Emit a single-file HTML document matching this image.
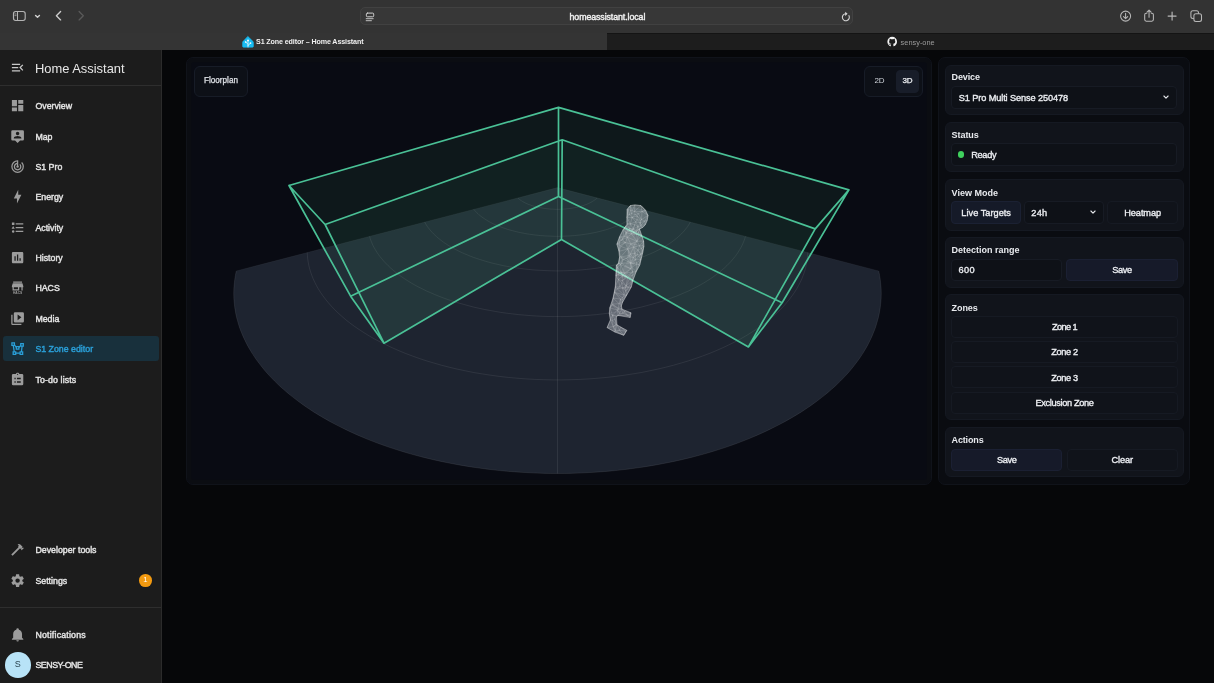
<!DOCTYPE html>
<html lang="en">
<head>
<meta charset="utf-8">
<title>S1 Zone editor – Home Assistant</title>
<style>
*{box-sizing:border-box;margin:0;padding:0}
html,body{width:1214px;height:683px;overflow:hidden;background:#060709;font-family:"Liberation Sans",sans-serif;color:#e6e8ec}
.abs{position:absolute}
#root{position:relative;width:1214px;height:683px;overflow:hidden;will-change:transform;transform:translateZ(0)}
/* browser chrome */
#toolbar{left:0;top:0;width:1214px;height:33px;background:#333333}
#urlbox{left:360.4px;top:7.1px;width:493px;height:17.8px;border-radius:5px;background:#373737;border:1px solid #414141}
#urltext{left:507.4px;top:7.6px;width:200px;height:18px;line-height:18px;text-align:center;font-size:8.8px;letter-spacing:-0.08px;color:#f2f2f2;-webkit-text-stroke:0.4px #f2f2f2}
#tab1{left:0;top:33px;width:607px;height:17px;background:#343434}
#tab2{left:607px;top:33px;width:607px;height:17px;background:#1d1d1d;border-top:1px solid #141414}
.tabt{top:34.4px;height:17px;line-height:17px;font-size:7.1px;letter-spacing:-0.1px;white-space:nowrap}
/* sidebar */
#sidebar{left:0;top:50px;width:162px;height:633px;background:#1c1c1c;border-right:1px solid #2b2b2b}
#sbhead{left:0;top:50px;width:161px;height:36px;border-bottom:1px solid #2e2e2e}
#sbtitle{left:35px;top:58.9px;height:20px;line-height:20px;font-size:12.9px;color:#e7e7e7;white-space:nowrap}
.it{left:35.4px;height:14px;line-height:14px;font-size:8.8px;color:#e4e4e4;white-space:nowrap;-webkit-text-stroke:0.42px currentColor}
.ic{left:10px;width:14px;height:14px}
#sel{left:3px;top:336px;width:156px;height:25px;border-radius:3px;background:#18303c}
#sbdiv{left:0;top:607px;width:161px;height:1px;background:#2e2e2e}
/* main */
#canvas{left:185.5px;top:56.8px;width:746px;height:428.4px;border:1px solid #10131a;border-radius:7px;background:#090b13;box-shadow:inset 0 0 0 4.5px #0b0d12}
#panel{left:938.2px;top:56.8px;width:252px;height:428.4px;border:1px solid #10131a;border-radius:7px;background:#0a0c11}
.card{left:945px;width:239px;background:#11141b;border:1px solid #151922;border-radius:6px}
.lbl{left:951.6px;height:12px;line-height:12px;font-size:9px;font-weight:bold;color:#e8eaee;white-space:nowrap}
.fld{background:#0e1117;border:1px solid #171b24;border-radius:4px}
.btn{background:#141821;border:1px solid #1a1f2a;border-radius:4px}
.bt{height:12px;line-height:12px;font-size:9.2px;color:#eceef2;text-align:center;white-space:nowrap;-webkit-text-stroke:0.35px #eceef2;margin-top:0.4px}
</style>
</head>
<body>
<div id="root">
<!-- CHROME -->
<div id="toolbar" class="abs"></div>
<div id="urlbox" class="abs"></div>
<div id="urltext" class="abs">homeassistant.local</div>
<div id="tab1" class="abs"></div>
<div id="tab2" class="abs"></div>
<div class="abs tabt" style="left:256px;color:#f0f0f0;font-weight:bold">S1 Zone editor – Home Assistant</div>
<div class="abs tabt" style="left:900.6px;color:#9c9c9c;font-size:7.4px;letter-spacing:0">sensy-one</div>
<!--CHROME-->
<svg class="abs" style="left:0;top:0" width="1214" height="50" viewBox="0 0 1214 50" fill="none" stroke-linecap="round" stroke-linejoin="round">
<rect x="13.5" y="11.5" width="11.7" height="9" rx="2.2" stroke="#b4b4b4" stroke-width="1.15"/><path d="M17.5 11.7V20.3" stroke="#b4b4b4" stroke-width="1"/><path d="M14.9 14h1.2M14.9 15.6h1.2" stroke="#b4b4b4" stroke-width="0.7"/>
<path d="M35.6 15.5L37.5 17.2L39.4 15.5" stroke="#cfcfcf" stroke-width="1.5"/>
<path d="M60.6 11.5L56.4 15.7L60.6 19.9" stroke="#cdcdcd" stroke-width="1.35"/>
<path d="M79.1 11.5L83.3 15.7L79.1 19.9" stroke="#595959" stroke-width="1.35"/>
<rect x="366.4" y="13.1" width="7.3" height="3.7" rx="1" stroke="#d0d0d0" stroke-width="1"/><path d="M366.2 18.7H373.2M366.2 20.7H371.4" stroke="#d0d0d0" stroke-width="0.9"/>
<path d="M848.9 15.6A3.5 3.5 0 1 1 845.7 13.8" stroke="#d8d8d8" stroke-width="1.05"/><path d="M845.2 11.7L847.6 13.8L845.2 15.9Z" fill="#d8d8d8" stroke="none"/>
<circle cx="1125.6" cy="16.1" r="5" stroke="#b8b8b8" stroke-width="1.05"/><path d="M1125.6 13.3V18.6M1123.5 16.6L1125.6 18.7L1127.7 16.6" stroke="#b8b8b8" stroke-width="1.05"/>
<path d="M1146.8 13.2H1146.3A1.6 1.6 0 0 0 1144.7 14.8V19.6A1.6 1.6 0 0 0 1146.3 21.2H1151.8A1.6 1.6 0 0 0 1153.4 19.6V14.8A1.6 1.6 0 0 0 1151.8 13.2H1151.3" stroke="#b8b8b8" stroke-width="1.05"/><path d="M1149.05 17.3V10.3M1147 12.2L1149.05 10.1L1151.1 12.2" stroke="#b8b8b8" stroke-width="1.05"/>
<path d="M1168.1 16.1H1176.1M1172.1 12.1V20.1" stroke="#b8b8b8" stroke-width="1.15"/>
<rect x="1190.9" y="10.8" width="7.6" height="7.6" rx="2" stroke="#b8b8b8" stroke-width="1.05"/><rect x="1193.9" y="13.8" width="7.6" height="7.6" rx="2" fill="#333333" stroke="#b8b8b8" stroke-width="1.05"/>
<path d="M248 36.6L253.1 41.6Q253.4 41.9 253.4 42.4V46.3Q253.4 47.2 252.5 47.2H243.5Q242.6 47.2 242.6 46.3V42.4Q242.6 41.9 242.9 41.6Z" fill="#18bcf2" stroke="#18bcf2" stroke-width="0.6"/>
<path d="M248 47V40.6M248 45.6L250.3 43.3M248 44.3L245.9 42.2" stroke="#fff" stroke-width="0.7"/><circle cx="248" cy="40.4" r="0.95" fill="#fff"/><circle cx="250.5" cy="43.1" r="0.85" fill="#fff"/><circle cx="245.7" cy="42" r="0.85" fill="#fff"/>
<circle cx="892.2" cy="41.7" r="5" fill="#1c1c1c"/><g transform="translate(886.4 35.9) scale(0.483)"><path d="M12,2A10,10 0 0,0 2,12C2,16.42 4.87,20.17 8.84,21.5C9.34,21.58 9.5,21.27 9.5,21C9.5,20.77 9.5,20.14 9.5,19.31C6.73,19.91 6.14,17.97 6.14,17.97C5.68,16.81 5.03,16.5 5.03,16.5C4.12,15.88 5.1,15.9 5.1,15.9C6.1,15.97 6.63,16.93 6.63,16.93C7.5,18.45 8.97,18 9.54,17.76C9.63,17.11 9.89,16.67 10.17,16.42C7.95,16.17 5.62,15.31 5.62,11.5C5.62,10.39 6,9.5 6.65,8.79C6.55,8.54 6.2,7.5 6.75,6.15C6.75,6.15 7.59,5.88 9.5,7.17C10.29,6.95 11.15,6.84 12,6.84C12.85,6.84 13.71,6.95 14.5,7.17C16.41,5.88 17.25,6.15 17.25,6.15C17.8,7.5 17.45,8.54 17.35,8.79C18,9.5 18.38,10.39 18.38,11.5C18.38,15.32 16.04,16.16 13.81,16.41C14.17,16.72 14.5,17.33 14.5,18.26C14.5,19.6 14.5,20.68 14.5,21C14.5,21.27 14.66,21.59 15.17,21.5C19.14,20.16 22,16.42 22,12A10,10 0 0,0 12,2Z" fill="#f4f4f4"/></g>
</svg>
<!--/CHROME-->
<!-- SIDEBAR -->
<div id="sidebar" class="abs"></div>
<div id="sbhead" class="abs"></div>
<div id="sbtitle" class="abs">Home Assistant</div>
<div id="sel" class="abs"></div>
<div class="abs it" style="top:99px">Overview</div>
<div class="abs it" style="top:129.5px">Map</div>
<div class="abs it" style="top:160px">S1 Pro</div>
<div class="abs it" style="top:190px">Energy</div>
<div class="abs it" style="top:220.5px">Activity</div>
<div class="abs it" style="top:251px">History</div>
<div class="abs it" style="top:281px">HACS</div>
<div class="abs it" style="top:311.5px">Media</div>
<div class="abs it" style="top:342px;color:#2a9fd8">S1 Zone editor</div>
<div class="abs it" style="top:372.5px;letter-spacing:0.12px">To-do lists</div>
<div class="abs it" style="top:543px">Developer tools</div>
<div class="abs it" style="top:573.5px">Settings</div>
<div id="sbdiv" class="abs"></div>
<div class="abs it" style="top:627.5px;letter-spacing:0.2px">Notifications</div>
<div class="abs it" style="top:658px;letter-spacing:-0.45px">SENSY-ONE</div>
<!--ICONS-->
<svg class="abs" style="left:10.0px;top:60.4px" width="15.2" height="15.2" viewBox="0 0 24 24"><path fill="#c8c8c8" fill-rule="evenodd" d="M21,15.61L19.59,17L14.58,12L19.59,7L21,8.39L17.44,12L21,15.61M3,6H16V8H3V6M3,13V11H13V13H3M3,18V16H16V18H3Z"/></svg>
<svg class="abs" style="left:10.0px;top:98.4px" width="15.2" height="15.2" viewBox="0 0 24 24"><path fill="#9c9c9c" fill-rule="evenodd" d="M13,3V9H21V3M13,21H21V11H13M3,21H11V15H3M3,13H11V3H3V13Z"/></svg>
<svg class="abs" style="left:10.0px;top:128.9px" width="15.2" height="15.2" viewBox="0 0 24 24"><path fill="#9c9c9c" fill-rule="evenodd" d="M20,2H4A2,2 0 0,0 2,4V16A2,2 0 0,0 4,18H8L12,22L16,18H20A2,2 0 0,0 22,16V4A2,2 0 0,0 20,2M12,4.3C13.5,4.3 14.7,5.5 14.7,7C14.7,8.5 13.5,9.7 12,9.7C10.5,9.7 9.3,8.5 9.3,7C9.3,5.5 10.5,4.3 12,4.3M18,15H6V14.1C6,12.1 10,11 12,11C14,11 18,12.1 18,14.1V15Z"/></svg>
<svg class="abs" style="left:10.0px;top:159.4px" width="15.2" height="15.2" viewBox="0 0 24 24"><path fill="#9c9c9c" fill-rule="evenodd" d="M19.07,4.93L17.66,6.34C19.1,7.79 20,9.79 20,12A8,8 0 0,1 12,20A8,8 0 0,1 4,12C4,7.92 7.05,4.56 11,4.07V6.09C8.16,6.57 6,9.03 6,12A6,6 0 0,0 12,18A6,6 0 0,0 18,12C18,10.34 17.33,8.84 16.24,7.76L14.83,9.17C15.55,9.9 16,10.9 16,12A4,4 0 0,1 12,16A4,4 0 0,1 8,12C8,10.14 9.28,8.59 11,8.14V10.28C10.4,10.63 10,11.26 10,12A2,2 0 0,0 12,14A2,2 0 0,0 14,12C14,11.26 13.6,10.62 13,10.28V2H12A10,10 0 0,0 2,12A10,10 0 0,0 12,22A10,10 0 0,0 22,12C22,9.24 20.88,6.74 19.07,4.93Z"/></svg>
<svg class="abs" style="left:10.0px;top:189.4px" width="15.2" height="15.2" viewBox="0 0 24 24"><path fill="#9c9c9c" fill-rule="evenodd" d="M11,15H6L13,1V9H18L11,23V15Z"/></svg>
<svg class="abs" style="left:10.0px;top:219.9px" width="15.2" height="15.2" viewBox="0 0 24 24"><path fill="#9c9c9c" fill-rule="evenodd" d="M5,9.5L7.5,14H2.5L5,9.5M3,4H7V8H3V4M5,20A2,2 0 0,0 7,18A2,2 0 0,0 5,16A2,2 0 0,0 3,18A2,2 0 0,0 5,20M9,5V7H21V5H9M9,19H21V17H9V19M9,13H21V11H9V13Z"/></svg>
<svg class="abs" style="left:10.0px;top:250.4px" width="15.2" height="15.2" viewBox="0 0 24 24"><path fill="#9c9c9c" fill-rule="evenodd" d="M17,17H15V13H17M13,17H11V7H13M9,17H7V10H9M19,3H5C3.9,3 3,3.9 3,5V19C3,20.1 3.9,21 5,21H19C20.1,21 21,20.1 21,19V5C21,3.9 20.1,3 19,3Z"/></svg>
<svg class="abs" style="left:10px;top:280.4px" width="15.2" height="15.2" viewBox="0 0 24 24"><path fill="#9c9c9c" d="M5,2.5H19V4.3H5V2.5M4.4,5.2H19.6L21,9.6V11.4H20V16.6H4V11.4H3V9.6L4.4,5.2M6,11.6V14.6H12.6V11.6H6M14.6,11.6V16.6H18V11.6H14.6Z"/><text x="12" y="22.4" font-size="5.2" font-weight="bold" text-anchor="middle" fill="#9c9c9c" font-family="Liberation Sans, sans-serif">HACS</text></svg>
<svg class="abs" style="left:10.0px;top:310.9px" width="15.2" height="15.2" viewBox="0 0 24 24"><path fill="#9c9c9c" fill-rule="evenodd" d="M4,6H2V20A2,2 0 0,0 4,22H18V20H4V6M20,2H8A2,2 0 0,0 6,4V16A2,2 0 0,0 8,18H20A2,2 0 0,0 22,16V4A2,2 0 0,0 20,2M12,14.5V5.5L18,10L12,14.5Z"/></svg>
<svg class="abs" style="left:10.0px;top:341.4px" width="15.2" height="15.2" viewBox="0 0 24 24"><path fill="#2a9fd8" fill-rule="evenodd" d="M2,2V8H4.28L5.57,16H4V22H10V20.06L15,20.05V22H21V16H19.17L20,9H22V3H16V6.53L14.8,8H9.59L8,5.82V2M4,4H6V6H4M18,5H20V7H18M6.31,8H7.11L9,10.59V14H15V10.91L16.57,9H18L17.16,16H15V18.06H10V16H7.6M11,10H13V12H11M6,18H8V20H6M17,18H19V20H17"/></svg>
<svg class="abs" style="left:10.0px;top:371.9px" width="15.2" height="15.2" viewBox="0 0 24 24"><path fill="#9c9c9c" fill-rule="evenodd" d="M19,3H14.82C14.4,1.84 13.3,1 12,1C10.7,1 9.6,1.84 9.18,3H5A2,2 0 0,0 3,5V19A2,2 0 0,0 5,21H19A2,2 0 0,0 21,19V5A2,2 0 0,0 19,3Z M12,2.6A1,1 0 0,1 13,3.6A1,1 0 0,1 12,4.6A1,1 0 0,1 11,3.6A1,1 0 0,1 12,2.6Z M7,9H9V11.3H7Z M11,9H17V11.3H11Z M7,14.5H9V16.8H7Z M11,14.5H17V16.8H11Z"/></svg>
<svg class="abs" style="left:10.0px;top:542.4px" width="15.2" height="15.2" viewBox="0 0 24 24"><path fill="#9c9c9c" fill-rule="evenodd" d="M2,19.63L13.43,8.2L12.72,7.5L14.14,6.07L12,3.89C13.2,2.7 15.09,2.7 16.27,3.89L19.87,7.5L18.45,8.91H21.29L22,9.62L18.45,13.21L17.74,12.5V9.62L16.27,11.04L15.56,10.33L4.13,21.76L2,19.63Z"/></svg>
<svg class="abs" style="left:10.0px;top:572.9px" width="15.2" height="15.2" viewBox="0 0 24 24"><path fill="#9c9c9c" fill-rule="evenodd" d="M12,15.5A3.5,3.5 0 0,1 8.5,12A3.5,3.5 0 0,1 12,8.5A3.5,3.5 0 0,1 15.5,12A3.5,3.5 0 0,1 12,15.5M19.43,12.97C19.47,12.65 19.5,12.33 19.5,12C19.5,11.67 19.47,11.34 19.43,11L21.54,9.37C21.73,9.22 21.78,8.95 21.66,8.73L19.66,5.27C19.54,5.05 19.27,4.96 19.05,5.05L16.56,6.05C16.04,5.66 15.5,5.32 14.87,5.07L14.5,2.42C14.46,2.18 14.25,2 14,2H10C9.75,2 9.54,2.18 9.5,2.42L9.13,5.07C8.5,5.32 7.96,5.66 7.44,6.05L4.95,5.05C4.73,4.96 4.46,5.05 4.34,5.27L2.34,8.73C2.21,8.95 2.27,9.22 2.46,9.37L4.57,11C4.53,11.34 4.5,11.67 4.5,12C4.5,12.33 4.53,12.65 4.57,12.97L2.46,14.63C2.27,14.78 2.21,15.05 2.34,15.27L4.34,18.73C4.46,18.95 4.73,19.03 4.95,18.95L7.44,17.94C7.96,18.34 8.5,18.68 9.13,18.93L9.5,21.58C9.54,21.82 9.75,22 10,22H14C14.25,22 14.46,21.82 14.5,21.58L14.87,18.93C15.5,18.67 16.04,18.34 16.56,17.94L19.05,18.95C19.27,19.03 19.54,18.95 19.66,18.73L21.66,15.27C21.78,15.05 21.73,14.78 21.54,14.63L19.43,12.97Z"/></svg>
<svg class="abs" style="left:10.0px;top:626.9px" width="15.2" height="15.2" viewBox="0 0 24 24"><path fill="#9c9c9c" fill-rule="evenodd" d="M21,19V20H3V19L5,17V11C5,7.9 7.03,5.17 10,4.29C10,4.19 10,4.1 10,4A2,2 0 0,1 12,2A2,2 0 0,1 14,4C14,4.1 14,4.19 14,4.29C16.97,5.17 19,7.9 19,11V17L21,19M14,21A2,2 0 0,1 12,23A2,2 0 0,1 10,21"/></svg>
<div class="abs" style="left:139px;top:574.3px;width:12.6px;height:12.6px;border-radius:50%;background:#f39a10;color:#fff;font-size:7.6px;line-height:12.6px;text-align:center">1</div>
<div class="abs" style="left:5px;top:652px;width:25.5px;height:25.5px;border-radius:50%;background:#b8e3f7;color:#2b4450;font-size:9px;line-height:25.5px;text-align:center">S</div>
<!--/ICONS-->
<!-- MAIN -->
<div id="canvas" class="abs"></div>
<div id="panel" class="abs"></div>
<!--SCENE-->
<svg class="abs" style="left:0;top:0" width="1214" height="683" viewBox="0 0 1214 683">
<path d="M557.5 187.6 L236.3 270.9 L235.7 273.6 L235.2 276.3 L234.8 279.1 L234.4 281.9 L234.1 284.7 L233.9 287.6 L233.8 290.5 L233.7 293.4 L233.8 296.3 L233.9 299.3 L234.1 302.3 L234.4 305.3 L234.8 308.4 L235.3 311.4 L235.9 314.6 L236.6 317.7 L237.5 320.8 L238.4 324.0 L239.4 327.2 L240.6 330.4 L241.8 333.6 L243.2 336.9 L244.7 340.1 L246.4 343.4 L248.1 346.7 L250.0 350.0 L252.1 353.3 L254.2 356.6 L256.5 359.9 L259.0 363.2 L261.5 366.5 L264.3 369.9 L267.1 373.2 L270.2 376.5 L273.3 379.8 L276.6 383.1 L280.1 386.4 L283.7 389.6 L287.5 392.9 L291.5 396.1 L295.6 399.3 L299.8 402.5 L304.2 405.7 L308.8 408.8 L313.5 411.9 L318.4 414.9 L323.5 417.9 L328.7 420.9 L334.1 423.8 L339.6 426.6 L345.3 429.5 L351.1 432.2 L357.1 434.9 L363.2 437.5 L369.5 440.1 L375.9 442.6 L382.5 445.0 L389.2 447.3 L396.1 449.5 L403.0 451.7 L410.1 453.8 L417.4 455.8 L424.7 457.7 L432.2 459.5 L439.7 461.2 L447.4 462.8 L455.1 464.3 L463.0 465.7 L470.9 467.0 L478.9 468.1 L487.0 469.2 L495.1 470.1 L503.3 471.0 L511.6 471.7 L519.9 472.3 L528.2 472.8 L536.6 473.1 L544.9 473.4 L553.3 473.5 L561.7 473.5 L570.1 473.4 L578.4 473.1 L586.8 472.8 L595.1 472.3 L603.4 471.7 L611.7 471.0 L619.9 470.1 L628.0 469.2 L636.1 468.1 L644.1 467.0 L652.0 465.7 L659.9 464.3 L667.6 462.8 L675.3 461.2 L682.8 459.5 L690.3 457.7 L697.6 455.8 L704.9 453.8 L712.0 451.7 L718.9 449.5 L725.8 447.3 L732.5 445.0 L739.1 442.6 L745.5 440.1 L751.8 437.5 L757.9 434.9 L763.9 432.2 L769.7 429.5 L775.4 426.6 L780.9 423.8 L786.3 420.9 L791.5 417.9 L796.6 414.9 L801.5 411.9 L806.2 408.8 L810.8 405.7 L815.2 402.5 L819.4 399.3 L823.5 396.1 L827.5 392.9 L831.3 389.6 L834.9 386.4 L838.4 383.1 L841.7 379.8 L844.8 376.5 L847.9 373.2 L850.7 369.9 L853.5 366.5 L856.0 363.2 L858.5 359.9 L860.8 356.6 L862.9 353.3 L865.0 350.0 L866.9 346.7 L868.6 343.4 L870.3 340.1 L871.8 336.9 L873.2 333.6 L874.4 330.4 L875.6 327.2 L876.6 324.0 L877.5 320.8 L878.4 317.7 L879.1 314.6 L879.7 311.4 L880.2 308.4 L880.6 305.3 L880.9 302.3 L881.1 299.3 L881.2 296.3 L881.3 293.4 L881.2 290.5 L881.1 287.6 L880.9 284.7 L880.6 281.9 L880.2 279.1 L879.8 276.3 L879.3 273.6 L878.7 270.9Z" fill="#1e2430"/>
<path d="M517.8 197.9 L518.2 198.3 L518.6 198.7 L519.1 199.0 L519.6 199.4 L520.1 199.8 L520.6 200.2 L521.1 200.6 L521.7 200.9 L522.3 201.3 L522.9 201.6 L523.5 202.0 L524.1 202.3 L524.8 202.7 L525.4 203.0 L526.1 203.3 L526.8 203.6 L527.6 204.0 L528.3 204.3 L529.0 204.6 L529.8 204.8 L530.6 205.1 L531.4 205.4 L532.2 205.7 L533.0 205.9 L533.9 206.2 L534.7 206.4 L535.6 206.6 L536.5 206.9 L537.4 207.1 L538.3 207.3 L539.2 207.5 L540.1 207.7 L541.1 207.8 L542.0 208.0 L543.0 208.2 L543.9 208.3 L544.9 208.5 L545.9 208.6 L546.9 208.7 L547.9 208.8 L548.9 208.9 L549.9 209.0 L550.9 209.1 L551.9 209.1 L552.9 209.2 L553.9 209.2 L554.9 209.3 L556.0 209.3 L557.0 209.3 L558.0 209.3 L559.0 209.3 L560.1 209.3 L561.1 209.2 L562.1 209.2 L563.1 209.1 L564.1 209.1 L565.1 209.0 L566.1 208.9 L567.1 208.8 L568.1 208.7 L569.1 208.6 L570.1 208.5 L571.1 208.3 L572.0 208.2 L573.0 208.0 L573.9 207.8 L574.9 207.7 L575.8 207.5 L576.7 207.3 L577.6 207.1 L578.5 206.9 L579.4 206.6 L580.3 206.4 L581.1 206.2 L582.0 205.9 L582.8 205.7 L583.6 205.4 L584.4 205.1 L585.2 204.8 L586.0 204.6 L586.7 204.3 L587.4 204.0 L588.2 203.6 L588.9 203.3 L589.6 203.0 L590.2 202.7 L590.9 202.3 L591.5 202.0 L592.1 201.6 L592.7 201.3 L593.3 200.9 L593.9 200.6 L594.4 200.2 L594.9 199.8 L595.4 199.4 L595.9 199.0 L596.4 198.7 L596.8 198.3 L597.2 197.9" fill="none" stroke="#ffffff" stroke-opacity="0.085" stroke-width="0.9"/>
<path d="M473.7 209.3 L474.5 210.2 L475.2 211.0 L476.0 211.9 L476.9 212.8 L477.8 213.6 L478.7 214.5 L479.7 215.3 L480.8 216.2 L481.9 217.0 L483.0 217.8 L484.2 218.6 L485.4 219.4 L486.7 220.2 L488.0 221.0 L489.4 221.8 L490.8 222.5 L492.2 223.3 L493.7 224.0 L495.3 224.7 L496.9 225.4 L498.5 226.1 L500.2 226.7 L501.9 227.4 L503.6 228.0 L505.4 228.6 L507.2 229.2 L509.1 229.8 L511.0 230.3 L512.9 230.8 L514.9 231.3 L516.9 231.8 L518.9 232.3 L520.9 232.7 L523.0 233.1 L525.1 233.5 L527.2 233.9 L529.4 234.2 L531.5 234.5 L533.7 234.8 L535.9 235.1 L538.2 235.3 L540.4 235.6 L542.7 235.7 L544.9 235.9 L547.2 236.0 L549.5 236.1 L551.8 236.2 L554.1 236.3 L556.4 236.3 L558.6 236.3 L560.9 236.3 L563.2 236.2 L565.5 236.1 L567.8 236.0 L570.1 235.9 L572.3 235.7 L574.6 235.6 L576.8 235.3 L579.1 235.1 L581.3 234.8 L583.5 234.5 L585.6 234.2 L587.8 233.9 L589.9 233.5 L592.0 233.1 L594.1 232.7 L596.1 232.3 L598.1 231.8 L600.1 231.3 L602.1 230.8 L604.0 230.3 L605.9 229.8 L607.8 229.2 L609.6 228.6 L611.4 228.0 L613.1 227.4 L614.8 226.7 L616.5 226.1 L618.1 225.4 L619.7 224.7 L621.3 224.0 L622.8 223.3 L624.2 222.5 L625.6 221.8 L627.0 221.0 L628.3 220.2 L629.6 219.4 L630.8 218.6 L632.0 217.8 L633.1 217.0 L634.2 216.2 L635.3 215.3 L636.3 214.5 L637.2 213.6 L638.1 212.8 L639.0 211.9 L639.8 211.0 L640.5 210.2 L641.3 209.3" fill="none" stroke="#ffffff" stroke-opacity="0.085" stroke-width="0.9"/>
<path d="M424.6 222.0 L425.5 223.5 L426.4 225.0 L427.3 226.5 L428.4 227.9 L429.6 229.4 L430.8 230.9 L432.1 232.3 L433.5 233.8 L435.0 235.2 L436.6 236.7 L438.2 238.1 L440.0 239.5 L441.8 240.9 L443.7 242.3 L445.7 243.7 L447.8 245.0 L450.0 246.4 L452.3 247.7 L454.6 249.0 L457.0 250.2 L459.6 251.5 L462.1 252.7 L464.8 253.9 L467.6 255.0 L470.4 256.2 L473.3 257.3 L476.3 258.3 L479.3 259.3 L482.5 260.3 L485.7 261.3 L488.9 262.2 L492.2 263.1 L495.6 263.9 L499.1 264.7 L502.6 265.5 L506.1 266.2 L509.7 266.8 L513.4 267.4 L517.1 268.0 L520.8 268.5 L524.6 269.0 L528.4 269.4 L532.2 269.8 L536.0 270.1 L539.9 270.3 L543.8 270.5 L547.7 270.7 L551.6 270.8 L555.5 270.9 L559.5 270.9 L563.4 270.8 L567.3 270.7 L571.2 270.5 L575.1 270.3 L579.0 270.1 L582.8 269.8 L586.6 269.4 L590.4 269.0 L594.2 268.5 L597.9 268.0 L601.6 267.4 L605.3 266.8 L608.9 266.2 L612.4 265.5 L615.9 264.7 L619.4 263.9 L622.8 263.1 L626.1 262.2 L629.3 261.3 L632.5 260.3 L635.7 259.3 L638.7 258.3 L641.7 257.3 L644.6 256.2 L647.4 255.0 L650.2 253.9 L652.9 252.7 L655.4 251.5 L658.0 250.2 L660.4 249.0 L662.7 247.7 L665.0 246.4 L667.2 245.0 L669.3 243.7 L671.3 242.3 L673.2 240.9 L675.0 239.5 L676.8 238.1 L678.4 236.7 L680.0 235.2 L681.5 233.8 L682.9 232.3 L684.2 230.9 L685.4 229.4 L686.6 227.9 L687.7 226.5 L688.6 225.0 L689.5 223.5 L690.4 222.0" fill="none" stroke="#ffffff" stroke-opacity="0.085" stroke-width="0.9"/>
<path d="M369.5 236.3 L370.2 238.5 L371.0 240.8 L371.9 243.0 L372.9 245.3 L374.1 247.6 L375.4 249.8 L376.8 252.1 L378.3 254.4 L380.0 256.6 L381.9 258.9 L383.8 261.2 L385.9 263.4 L388.2 265.7 L390.5 267.9 L393.1 270.1 L395.7 272.3 L398.6 274.5 L401.5 276.7 L404.6 278.8 L407.9 280.9 L411.3 283.0 L414.8 285.0 L418.5 287.0 L422.4 288.9 L426.3 290.9 L430.5 292.7 L434.7 294.5 L439.1 296.3 L443.6 298.0 L448.3 299.7 L453.0 301.3 L457.9 302.8 L463.0 304.2 L468.1 305.6 L473.3 307.0 L478.6 308.2 L484.1 309.4 L489.6 310.4 L495.2 311.4 L500.9 312.4 L506.7 313.2 L512.5 313.9 L518.4 314.6 L524.3 315.1 L530.3 315.6 L536.3 316.0 L542.3 316.3 L548.4 316.5 L554.5 316.6 L560.5 316.6 L566.6 316.5 L572.7 316.3 L578.7 316.0 L584.7 315.6 L590.7 315.1 L596.6 314.6 L602.5 313.9 L608.3 313.2 L614.1 312.4 L619.8 311.4 L625.4 310.4 L630.9 309.4 L636.4 308.2 L641.7 307.0 L646.9 305.6 L652.0 304.2 L657.1 302.8 L662.0 301.3 L666.7 299.7 L671.4 298.0 L675.9 296.3 L680.3 294.5 L684.5 292.7 L688.7 290.9 L692.6 288.9 L696.5 287.0 L700.2 285.0 L703.7 283.0 L707.1 280.9 L710.4 278.8 L713.5 276.7 L716.4 274.5 L719.3 272.3 L721.9 270.1 L724.5 267.9 L726.8 265.7 L729.1 263.4 L731.2 261.2 L733.1 258.9 L735.0 256.6 L736.7 254.4 L738.2 252.1 L739.6 249.8 L740.9 247.6 L742.1 245.3 L743.1 243.0 L744.0 240.8 L744.8 238.5 L745.5 236.3" fill="none" stroke="#ffffff" stroke-opacity="0.085" stroke-width="0.9"/>
<path d="M307.2 252.5 L307.4 255.6 L307.7 258.8 L308.2 262.1 L308.8 265.3 L309.6 268.6 L310.6 272.0 L311.8 275.3 L313.1 278.7 L314.7 282.1 L316.4 285.5 L318.3 288.9 L320.5 292.3 L322.9 295.8 L325.5 299.2 L328.3 302.7 L331.3 306.1 L334.5 309.5 L338.0 312.9 L341.8 316.3 L345.7 319.7 L349.9 323.0 L354.4 326.3 L359.1 329.5 L364.0 332.7 L369.2 335.9 L374.6 339.0 L380.3 342.0 L386.2 344.9 L392.3 347.8 L398.7 350.6 L405.2 353.3 L412.1 355.9 L419.1 358.4 L426.3 360.8 L433.8 363.0 L441.4 365.2 L449.2 367.2 L457.2 369.1 L465.3 370.8 L473.6 372.5 L482.1 373.9 L490.6 375.2 L499.3 376.4 L508.1 377.4 L517.0 378.2 L525.9 378.9 L534.9 379.4 L543.9 379.7 L553.0 379.9 L562.0 379.9 L571.1 379.7 L580.1 379.4 L589.1 378.9 L598.0 378.2 L606.9 377.4 L615.7 376.4 L624.4 375.2 L632.9 373.9 L641.4 372.5 L649.7 370.8 L657.8 369.1 L665.8 367.2 L673.6 365.2 L681.2 363.0 L688.7 360.8 L695.9 358.4 L702.9 355.9 L709.8 353.3 L716.3 350.6 L722.7 347.8 L728.8 344.9 L734.7 342.0 L740.4 339.0 L745.8 335.9 L751.0 332.7 L755.9 329.5 L760.6 326.3 L765.1 323.0 L769.3 319.7 L773.2 316.3 L777.0 312.9 L780.5 309.5 L783.7 306.1 L786.7 302.7 L789.5 299.2 L792.1 295.8 L794.5 292.3 L796.7 288.9 L798.6 285.5 L800.3 282.1 L801.9 278.7 L803.2 275.3 L804.4 272.0 L805.4 268.6 L806.2 265.3 L806.8 262.1 L807.3 258.8 L807.6 255.6 L807.8 252.5" fill="none" stroke="#ffffff" stroke-opacity="0.085" stroke-width="0.9"/>
<path d="M236.3 270.9 L235.4 275.2 L234.7 279.7 L234.2 284.2 L233.8 288.8 L233.7 293.5 L233.8 298.2 L234.2 303.0 L234.8 307.9 L235.6 312.9 L236.7 317.9 L238.1 322.9 L239.7 328.1 L241.7 333.2 L244.0 338.4 L246.5 343.7 L249.5 349.0 L252.7 354.3 L256.3 359.6 L260.3 364.9 L264.6 370.3 L269.3 375.6 L274.4 380.9 L279.9 386.2 L285.8 391.4 L292.1 396.6 L298.8 401.7 L305.9 406.8 L313.4 411.8 L321.3 416.6 L329.7 421.4 L338.4 426.0 L347.5 430.5 L357.1 434.9 L367.0 439.1 L377.3 443.1 L388.0 446.9 L399.0 450.5 L410.4 453.9 L422.0 457.0 L434.0 459.9 L446.2 462.5 L458.7 464.9 L471.4 467.0 L484.3 468.8 L497.4 470.4 L510.6 471.6 L523.9 472.5 L537.3 473.2 L550.8 473.5 L564.2 473.5 L577.7 473.2 L591.1 472.5 L604.4 471.6 L617.6 470.4 L630.7 468.8 L643.6 467.0 L656.3 464.9 L668.8 462.5 L681.0 459.9 L693.0 457.0 L704.6 453.9 L716.0 450.5 L727.0 446.9 L737.7 443.1 L748.0 439.1 L757.9 434.9 L767.5 430.5 L776.6 426.0 L785.3 421.4 L793.7 416.6 L801.6 411.8 L809.1 406.8 L816.2 401.7 L822.9 396.6 L829.2 391.4 L835.1 386.2 L840.6 380.9 L845.7 375.6 L850.4 370.3 L854.7 364.9 L858.7 359.6 L862.3 354.3 L865.5 349.0 L868.5 343.7 L871.0 338.4 L873.3 333.2 L875.3 328.1 L876.9 322.9 L878.3 317.9 L879.4 312.9 L880.2 307.9 L880.8 303.0 L881.2 298.2 L881.3 293.5 L881.2 288.8 L880.8 284.2 L880.3 279.7 L879.6 275.2 L878.7 270.9" fill="none" stroke="#ffffff" stroke-opacity="0.085" stroke-width="0.9"/>
<path d="M557.5 187.6 L236.3 270.9" fill="none" stroke="#ffffff" stroke-opacity="0.05" stroke-width="0.9"/>
<path d="M557.5 187.6 L878.7 270.9" fill="none" stroke="#ffffff" stroke-opacity="0.05" stroke-width="0.9"/>
<path d="M557.5 187.6 L557.5 473.5" fill="none" stroke="#ffffff" stroke-opacity="0.09" stroke-width="0.9"/>
<path d="M289.0 185.5 L558.5 107.4 L848.9 189.9 L782.1 302.7 L748.4 346.9 L561.5 239.5 L384.0 343.2 L350.6 296.2Z" fill="#52c38f" fill-opacity="0.072"/>
<path d="M325.1 224.5 L562.2 139.8 L815.2 228.9 L748.4 346.9 L561.5 239.5 L384.0 343.2Z" fill="#52c38f" fill-opacity="0.055"/>
<path d="M289.0 185.5 L558.5 107.4 L848.9 189.9 M325.1 224.5 L562.2 139.8 L815.2 228.9 M350.6 296.2 L558.5 196.5 L782.1 302.7 M384.0 343.2 L561.5 239.5 L748.4 346.9 M558.5 107.4 L558.5 196.5 M562.2 139.8 L561.5 239.5 M289.0 185.5 L325.1 224.5 M289.0 185.5 L350.6 296.2 L384.0 343.2 M325.1 224.5 L384.0 343.2 M848.9 189.9 L815.2 228.9 M848.9 189.9 L782.1 302.7 L748.4 346.9 M815.2 228.9 L748.4 346.9" fill="none" stroke="#4ac196" stroke-width="1.7" stroke-linejoin="round" stroke-linecap="round"/>
<!--FIG-->
<path d="M634.9 204.9 L641.0 205.6 L645.6 210.3 L648.0 215.4 L647.2 220.5 L645.1 225.1 L642.6 227.5 L639.5 229.0 L641.5 234.9 L643.6 241.0 L643.9 246.2 L642.6 253.3 L641.0 259.5 L639.8 265.0 L636.2 271.6 L632.9 280.4 L631.3 287.0 L626.9 294.7 L622.5 302.4 L621.4 305.7 L621.9 309.0 L631.0 312.8 L630.2 317.5 L618.1 315.5 L616.4 316.6 L617.0 324.9 L626.9 330.4 L623.8 335.3 L614.8 332.0 L607.1 327.6 L610.4 319.9 L609.3 313.4 L609.8 307.9 L613.1 298.0 L615.3 287.0 L615.9 276.0 L616.4 265.0 L618.3 263.6 L619.5 257.4 L619.0 251.3 L616.9 244.1 L619.5 236.9 L623.1 229.7 L626.9 224.6 L626.9 217.4 L627.2 209.2 L630.3 205.6Z" fill="#e3eaf0" fill-opacity="0.36"/>
<path d="M625.1 230.8 L633.8 230.8 L636.9 241.0 L636.4 253.3 L634.9 263.6 L628.0 272.7 L626.3 278.2 L621.4 277.6 L620.8 271.6 L627.2 261.5 L627.7 249.2 L625.6 240.0Z" fill="#ffffff" fill-opacity="0.10"/>
<path d="M638.8 234.3L636.8 234.5 M638.8 234.3L638.7 232.8 M638.8 234.3L637.0 241.3 M638.8 234.3L641.5 234.9 M619.5 241.2L621.0 240.3 M619.5 241.2L619.1 243.1 M619.5 241.2L616.9 244.1 M619.5 241.2L619.5 236.9 M627.7 277.1L632.8 272.0 M627.7 277.1L626.2 276.3 M627.7 277.1L632.8 274.8 M627.7 277.1L630.1 277.7 M627.7 277.1L626.1 285.8 M627.7 277.1L622.3 280.7 M632.1 210.7L630.6 210.1 M632.1 210.7L631.6 213.6 M632.1 210.7L634.4 211.4 M632.1 210.7L634.9 204.9 M632.1 210.7L630.3 205.6 M632.8 272.0L626.2 276.3 M632.8 272.0L624.6 273.2 M632.8 272.0L631.8 267.4 M632.8 272.0L632.8 274.8 M632.8 272.0L630.9 268.9 M632.8 272.0L636.2 271.6 M627.4 237.2L625.1 236.2 M627.4 237.2L630.8 244.0 M627.4 237.2L631.4 233.9 M627.4 237.2L622.5 239.7 M627.4 237.2L637.0 241.3 M627.4 237.2L625.4 242.5 M627.4 237.2L626.1 232.9 M635.4 231.1L633.3 229.0 M635.4 231.1L634.5 232.2 M635.4 231.1L636.1 230.4 M635.4 231.1L636.3 231.6 M641.0 225.1L640.2 222.8 M641.0 225.1L644.8 221.0 M641.0 225.1L640.5 225.9 M641.0 225.1L645.1 225.1 M641.0 225.1L642.6 227.5 M627.9 315.4L624.2 311.2 M627.9 315.4L622.7 313.2 M627.9 315.4L624.3 312.9 M627.9 315.4L629.6 315.3 M627.9 315.4L631.0 312.8 M627.9 315.4L630.2 317.5 M627.9 315.4L618.1 315.5 M621.9 282.9L626.1 285.8 M621.9 282.9L622.3 280.7 M621.9 282.9L622.5 288.0 M621.9 282.9L619.9 286.9 M621.9 282.9L618.3 279.5 M640.5 254.4L641.1 254.1 M640.5 254.4L638.9 256.4 M640.5 254.4L637.5 254.5 M640.5 254.4L640.9 254.6 M640.5 254.4L637.8 249.8 M634.8 224.6L630.4 223.9 M634.8 224.6L633.1 228.9 M634.8 224.6L633.3 229.0 M634.8 224.6L638.0 226.5 M634.8 224.6L635.8 221.8 M625.1 236.2L623.9 236.2 M625.1 236.2L622.6 237.9 M625.1 236.2L622.5 239.7 M625.1 236.2L626.1 232.9 M634.6 244.1L639.7 245.8 M634.6 244.1L630.8 244.0 M634.6 244.1L637.0 241.3 M634.6 244.1L633.6 247.1 M612.5 315.1L617.4 310.0 M612.5 315.1L615.1 319.5 M612.5 315.1L612.2 320.3 M612.5 315.1L618.1 315.5 M612.5 315.1L616.4 316.6 M612.5 315.1L610.4 319.9 M612.5 315.1L609.3 313.4 M612.5 315.1L609.8 307.9 M630.4 223.9L629.7 228.5 M630.4 223.9L633.1 228.9 M630.4 223.9L632.0 217.5 M630.4 223.9L627.1 223.4 M630.4 223.9L635.8 221.8 M630.4 223.9L626.9 224.6 M630.4 223.9L626.9 217.4 M615.0 325.9L613.3 326.6 M615.0 325.9L615.8 324.3 M615.0 325.9L615.4 330.4 M615.0 325.9L617.0 324.9 M629.7 228.5L633.1 228.9 M629.7 228.5L632.1 229.9 M629.7 228.5L632.5 229.3 M629.7 228.5L627.3 230.7 M629.7 228.5L625.8 226.2 M629.7 228.5L629.6 230.8 M629.7 228.5L626.9 224.6 M630.4 254.0L634.7 253.3 M630.4 254.0L629.3 255.5 M630.4 254.0L633.3 257.9 M630.4 254.0L629.9 256.6 M630.4 254.0L627.7 249.0 M630.4 254.0L633.6 247.1 M623.9 236.2L622.6 237.9 M623.9 236.2L626.1 232.9 M623.9 236.2L619.5 236.9 M623.9 236.2L623.1 229.7 M626.2 276.3L624.6 273.2 M626.2 276.3L622.3 275.3 M626.2 276.3L622.3 280.7 M626.2 276.3L622.4 276.1 M620.3 302.9L620.5 299.1 M620.3 302.9L619.1 303.7 M620.3 302.9L622.5 302.4 M620.3 302.9L621.4 305.7 M624.6 273.2L621.6 272.6 M624.6 273.2L622.3 275.3 M624.6 273.2L620.6 264.6 M624.6 273.2L620.8 271.8 M624.6 273.2L630.9 268.9 M642.8 249.8L641.1 254.1 M642.8 249.8L641.3 248.6 M642.8 249.8L643.9 246.2 M642.8 249.8L642.6 253.3 M621.6 272.6L622.3 275.3 M621.6 272.6L618.0 274.8 M621.6 272.6L618.0 273.6 M621.6 272.6L618.7 272.2 M621.6 272.6L620.8 271.8 M613.3 326.6L615.8 324.3 M613.3 326.6L615.4 330.4 M613.3 326.6L612.2 320.3 M613.3 326.6L614.8 332.0 M613.3 326.6L607.1 327.6 M613.3 326.6L610.4 319.9 M640.2 222.8L641.5 219.6 M640.2 222.8L637.0 219.7 M640.2 222.8L644.8 221.0 M640.2 222.8L638.0 226.5 M640.2 222.8L640.5 225.9 M640.2 222.8L635.8 221.8 M640.2 222.8L640.4 220.3 M624.2 311.2L622.7 313.2 M624.2 311.2L624.3 312.9 M624.2 311.2L621.9 309.0 M624.2 311.2L631.0 312.8 M636.8 234.5L633.7 232.9 M636.8 234.5L634.5 232.2 M636.8 234.5L631.4 233.9 M636.8 234.5L638.7 232.8 M636.8 234.5L636.3 231.6 M636.8 234.5L637.0 241.3 M621.0 240.3L622.6 237.9 M621.0 240.3L619.1 243.1 M621.0 240.3L622.5 239.7 M621.0 240.3L625.4 242.5 M621.0 240.3L619.5 236.9 M617.4 310.0L612.4 304.9 M617.4 310.0L619.6 313.5 M617.4 310.0L618.6 309.5 M617.4 310.0L618.1 308.3 M617.4 310.0L618.1 315.5 M617.4 310.0L609.8 307.9 M620.7 256.9L622.6 259.7 M620.7 256.9L629.3 255.5 M620.7 256.9L626.3 258.3 M620.7 256.9L627.7 249.0 M620.7 256.9L623.7 259.4 M620.7 256.9L619.5 257.4 M620.7 256.9L619.0 251.3 M615.8 324.3L615.1 319.5 M615.8 324.3L612.2 320.3 M615.8 324.3L617.0 324.9 M641.5 219.6L642.0 211.5 M641.5 219.6L644.8 221.0 M641.5 219.6L638.6 213.7 M641.5 219.6L637.0 216.0 M641.5 219.6L640.4 220.3 M641.5 219.6L648.0 215.4 M631.8 267.4L630.6 263.1 M631.8 267.4L636.5 264.3 M631.8 267.4L630.9 268.9 M631.8 267.4L636.2 271.6 M619.6 330.3L616.5 331.4 M619.6 330.3L620.6 327.1 M619.6 330.3L615.4 330.4 M619.6 330.3L625.6 331.2 M619.6 330.3L617.0 324.9 M619.6 330.3L623.8 335.3 M626.1 286.8L625.6 287.2 M626.1 286.8L626.1 285.8 M626.1 286.8L628.6 287.2 M626.1 286.8L625.1 288.4 M633.1 228.9L632.5 229.3 M633.1 228.9L633.3 229.0 M637.0 219.7L632.0 217.5 M637.0 219.7L637.0 216.0 M637.0 219.7L635.8 221.8 M637.0 219.7L640.4 220.3 M644.5 211.0L642.0 211.5 M644.5 211.0L645.2 210.1 M644.5 211.0L645.6 210.3 M644.5 211.0L648.0 215.4 M632.1 229.9L633.7 232.9 M632.1 229.9L632.5 229.3 M632.1 229.9L633.3 229.0 M632.1 229.9L634.5 232.2 M632.1 229.9L631.4 233.9 M632.1 229.9L629.6 230.8 M630.6 210.1L631.6 213.6 M630.6 210.1L629.6 214.6 M630.6 210.1L628.2 209.5 M630.6 210.1L630.3 205.6 M642.0 211.5L638.6 213.7 M642.0 211.5L645.2 210.1 M642.0 211.5L634.4 211.4 M642.0 211.5L641.0 205.6 M642.0 211.5L648.0 215.4 M620.9 246.4L619.9 245.6 M620.9 246.4L627.7 249.0 M620.9 246.4L625.4 242.5 M620.9 246.4L619.0 251.3 M639.7 245.8L641.3 248.6 M639.7 245.8L642.5 245.7 M639.7 245.8L637.8 249.8 M639.7 245.8L637.0 241.3 M639.7 245.8L633.6 247.1 M639.7 245.8L643.6 241.0 M612.4 304.9L612.7 304.1 M612.4 304.9L618.1 308.3 M612.4 304.9L609.8 307.9 M632.0 217.5L631.6 213.6 M632.0 217.5L637.0 216.0 M632.0 217.5L629.6 214.6 M632.0 217.5L635.1 214.5 M632.0 217.5L635.8 221.8 M632.0 217.5L626.9 217.4 M620.5 299.1L622.4 297.6 M620.5 299.1L614.6 292.3 M620.5 299.1L619.1 303.7 M620.5 299.1L622.6 299.5 M620.5 299.1L622.5 302.4 M620.5 299.1L613.1 298.0 M633.7 232.9L634.5 232.2 M633.7 232.9L631.4 233.9 M622.6 237.9L622.5 239.7 M622.6 237.9L619.5 236.9 M625.8 290.6L624.1 295.2 M625.8 290.6L622.5 288.0 M625.8 290.6L628.6 287.2 M625.8 290.6L625.1 288.4 M625.8 290.6L631.3 287.0 M625.8 290.6L626.9 294.7 M641.1 254.1L641.3 248.6 M641.1 254.1L640.9 254.6 M641.1 254.1L637.8 249.8 M641.1 254.1L642.6 253.3 M622.3 275.3L618.0 274.8 M622.3 275.3L622.4 276.1 M620.6 264.6L621.5 263.3 M620.6 264.6L617.6 267.1 M620.6 264.6L620.8 271.8 M620.6 264.6L619.5 263.3 M620.6 264.6L630.9 268.9 M620.6 264.6L618.3 263.6 M630.8 244.0L627.7 249.0 M630.8 244.0L637.0 241.3 M630.8 244.0L625.4 242.5 M630.8 244.0L633.6 247.1 M619.6 313.5L622.7 313.2 M619.6 313.5L618.6 309.5 M619.6 313.5L621.9 309.0 M619.6 313.5L618.1 315.5 M632.5 229.3L633.3 229.0 M622.4 297.6L614.6 292.3 M622.4 297.6L624.1 295.2 M622.4 297.6L622.6 299.5 M622.4 297.6L626.9 294.7 M634.7 253.3L633.3 257.9 M634.7 253.3L637.5 254.5 M634.7 253.3L637.8 249.8 M634.7 253.3L635.7 255.5 M634.7 253.3L633.6 247.1 M638.1 229.8L637.8 229.8 M638.1 229.8L638.7 232.8 M638.1 229.8L636.3 231.6 M638.1 229.8L639.5 229.0 M618.0 274.8L618.0 273.6 M618.0 274.8L622.4 276.1 M618.0 274.8L618.3 279.5 M618.0 274.8L615.9 276.0 M638.9 256.4L637.5 254.5 M638.9 256.4L640.9 254.6 M638.9 256.4L635.5 259.8 M638.9 256.4L635.7 255.5 M638.9 256.4L641.0 259.5 M633.3 229.0L638.0 226.5 M633.3 229.0L634.5 232.2 M633.3 229.0L636.1 230.4 M636.6 262.9L630.6 263.1 M636.6 262.9L636.5 264.3 M636.6 262.9L638.5 264.7 M636.6 262.9L635.5 259.8 M636.6 262.9L641.0 259.5 M622.6 259.7L621.5 263.3 M622.6 259.7L623.7 259.4 M622.6 259.7L619.5 263.3 M622.6 259.7L619.5 257.4 M629.3 255.5L626.3 258.3 M629.3 255.5L629.9 256.6 M629.3 255.5L627.7 249.0 M622.7 313.2L624.3 312.9 M622.7 313.2L621.9 309.0 M622.7 313.2L618.1 315.5 M612.7 304.1L618.1 308.3 M612.7 304.1L619.1 303.7 M612.7 304.1L609.8 307.9 M612.7 304.1L613.1 298.0 M644.8 221.0L648.0 215.4 M644.8 221.0L647.2 220.5 M644.8 221.0L645.1 225.1 M630.6 263.1L636.5 264.3 M630.6 263.1L626.3 258.3 M630.6 263.1L633.3 257.9 M630.6 263.1L629.9 256.6 M630.6 263.1L621.5 263.3 M630.6 263.1L623.7 259.4 M630.6 263.1L635.5 259.8 M630.6 263.1L630.9 268.9 M637.8 229.8L638.0 226.5 M637.8 229.8L636.1 230.4 M637.8 229.8L636.3 231.6 M637.8 229.8L639.5 229.0 M638.6 213.7L637.0 216.0 M638.6 213.7L635.1 214.5 M638.6 213.7L634.4 211.4 M619.9 245.6L619.1 243.1 M619.9 245.6L618.9 244.8 M619.9 245.6L625.4 242.5 M619.9 245.6L619.0 251.3 M636.5 264.3L638.5 264.7 M636.5 264.3L636.2 271.6 M614.6 292.3L624.1 295.2 M614.6 292.3L617.2 288.8 M614.6 292.3L613.1 298.0 M614.6 292.3L615.3 287.0 M618.0 273.6L618.7 272.2 M618.0 273.6L617.6 267.1 M618.0 273.6L615.9 276.0 M618.7 272.2L617.6 267.1 M618.7 272.2L620.8 271.8 M632.8 274.8L630.1 277.7 M632.8 274.8L636.2 271.6 M632.8 274.8L632.9 280.4 M616.5 331.4L615.4 330.4 M616.5 331.4L623.8 335.3 M616.5 331.4L614.8 332.0 M631.6 213.6L629.6 214.6 M631.6 213.6L635.1 214.5 M631.6 213.6L634.4 211.4 M616.8 265.6L617.6 267.1 M616.8 265.6L615.9 276.0 M616.8 265.6L616.4 265.0 M616.8 265.6L618.3 263.6 M638.0 226.5L636.1 230.4 M638.0 226.5L640.5 225.9 M638.0 226.5L635.8 221.8 M638.0 226.5L639.5 229.0 M620.6 327.1L625.6 331.2 M620.6 327.1L617.0 324.9 M620.6 327.1L626.9 330.4 M618.6 309.5L618.1 308.3 M618.6 309.5L621.9 309.0 M624.1 295.2L617.2 288.8 M624.1 295.2L622.5 288.0 M624.1 295.2L626.9 294.7 M641.3 248.6L642.5 245.7 M641.3 248.6L637.8 249.8 M641.3 248.6L643.9 246.2 M634.5 232.2L636.3 231.6 M626.3 258.3L629.9 256.6 M626.3 258.3L623.7 259.4 M637.0 216.0L635.1 214.5 M637.0 216.0L640.4 220.3 M630.1 277.7L626.1 285.8 M630.1 277.7L632.9 280.4 M645.2 210.1L641.0 205.6 M645.2 210.1L645.6 210.3 M625.6 287.2L626.1 285.8 M625.6 287.2L622.5 288.0 M625.6 287.2L625.1 288.4 M629.6 214.6L628.2 209.5 M629.6 214.6L627.8 214.7 M629.6 214.6L626.9 217.4 M631.4 233.9L637.0 241.3 M631.4 233.9L626.1 232.9 M631.4 233.9L629.6 230.8 M615.1 319.5L612.2 320.3 M615.1 319.5L616.4 316.6 M615.1 319.5L617.0 324.9 M626.1 285.8L622.3 280.7 M626.1 285.8L622.5 288.0 M626.1 285.8L628.6 287.2 M626.1 285.8L632.9 280.4 M633.3 257.9L629.9 256.6 M633.3 257.9L635.5 259.8 M633.3 257.9L635.7 255.5 M637.5 254.5L637.8 249.8 M637.5 254.5L635.7 255.5 M627.7 249.0L625.4 242.5 M627.7 249.0L633.6 247.1 M627.7 249.0L619.0 251.3 M640.9 254.6L642.6 253.3 M640.9 254.6L641.0 259.5 M624.3 228.9L627.3 230.7 M624.3 228.9L625.8 226.2 M624.3 228.9L626.1 232.9 M624.3 228.9L623.1 229.7 M619.1 243.1L618.9 244.8 M619.1 243.1L625.4 242.5 M619.1 243.1L616.9 244.1 M621.5 263.3L623.7 259.4 M621.5 263.3L619.5 263.3 M621.5 263.3L630.9 268.9 M622.3 280.7L622.4 276.1 M622.3 280.7L618.3 279.5 M622.5 239.7L625.4 242.5 M635.1 214.5L634.4 211.4 M642.5 245.7L643.6 241.0 M642.5 245.7L643.9 246.2 M627.3 230.7L625.8 226.2 M627.3 230.7L626.1 232.9 M627.3 230.7L629.6 230.8 M638.5 264.7L641.0 259.5 M638.5 264.7L639.8 265.0 M638.5 264.7L636.2 271.6 M622.4 276.1L618.3 279.5 M617.2 288.8L622.5 288.0 M617.2 288.8L619.9 286.9 M617.2 288.8L615.3 287.0 M622.5 288.0L625.1 288.4 M622.5 288.0L619.9 286.9 M617.6 267.1L620.8 271.8 M617.6 267.1L615.9 276.0 M617.6 267.1L618.3 263.6 M628.6 287.2L625.1 288.4 M628.6 287.2L632.9 280.4 M628.6 287.2L631.3 287.0 M615.4 330.4L617.0 324.9 M615.4 330.4L614.8 332.0 M618.9 244.8L619.0 251.3 M618.9 244.8L616.9 244.1 M636.1 230.4L636.3 231.6 M637.8 249.8L633.6 247.1 M627.1 223.4L626.9 224.6 M627.1 223.4L626.9 217.4 M625.8 226.2L623.1 229.7 M625.8 226.2L626.9 224.6 M618.1 308.3L619.1 303.7 M618.1 308.3L621.4 305.7 M618.1 308.3L621.9 309.0 M640.5 225.9L642.6 227.5 M640.5 225.9L639.5 229.0 M634.4 211.4L634.9 204.9 M634.4 211.4L641.0 205.6 M638.7 232.8L636.3 231.6 M638.7 232.8L639.5 229.0 M638.7 232.8L641.5 234.9 M635.5 259.8L635.7 255.5 M635.5 259.8L641.0 259.5 M619.5 263.3L618.3 263.6 M619.5 263.3L619.5 257.4 M628.2 209.5L627.8 214.7 M628.2 209.5L627.2 209.2 M628.2 209.5L630.3 205.6 M629.6 315.3L631.0 312.8 M629.6 315.3L630.2 317.5 M619.9 286.9L618.3 279.5 M619.9 286.9L615.3 287.0 M619.1 303.7L621.4 305.7 M619.1 303.7L613.1 298.0 M622.6 299.5L626.9 294.7 M622.6 299.5L622.5 302.4 M637.0 241.3L641.5 234.9 M637.0 241.3L643.6 241.0 M626.1 232.9L629.6 230.8 M626.1 232.9L623.1 229.7 M618.3 279.5L615.3 287.0 M618.3 279.5L615.9 276.0 M627.8 214.7L626.9 217.4 M627.8 214.7L627.2 209.2 M612.2 320.3L610.4 319.9 M625.6 331.2L626.9 330.4 M625.6 331.2L623.8 335.3 M634.9 204.9L641.0 205.6 M634.9 204.9L630.3 205.6 M641.0 205.6L645.6 210.3 M645.6 210.3L648.0 215.4 M648.0 215.4L647.2 220.5 M647.2 220.5L645.1 225.1 M645.1 225.1L642.6 227.5 M642.6 227.5L639.5 229.0 M639.5 229.0L641.5 234.9 M641.5 234.9L643.6 241.0 M643.6 241.0L643.9 246.2 M643.9 246.2L642.6 253.3 M642.6 253.3L641.0 259.5 M641.0 259.5L639.8 265.0 M639.8 265.0L636.2 271.6 M636.2 271.6L632.9 280.4 M632.9 280.4L631.3 287.0 M631.3 287.0L626.9 294.7 M626.9 294.7L622.5 302.4 M622.5 302.4L621.4 305.7 M621.4 305.7L621.9 309.0 M631.0 312.8L630.2 317.5 M618.1 315.5L616.4 316.6 M626.9 330.4L623.8 335.3 M623.8 335.3L614.8 332.0 M614.8 332.0L607.1 327.6 M607.1 327.6L610.4 319.9 M610.4 319.9L609.3 313.4 M609.3 313.4L609.8 307.9 M609.8 307.9L613.1 298.0 M613.1 298.0L615.3 287.0 M615.3 287.0L615.9 276.0 M615.9 276.0L616.4 265.0 M616.4 265.0L618.3 263.6 M618.3 263.6L619.5 257.4 M619.5 257.4L619.0 251.3 M619.0 251.3L616.9 244.1 M616.9 244.1L619.5 236.9 M619.5 236.9L623.1 229.7 M626.9 217.4L627.2 209.2 M627.2 209.2L630.3 205.6" fill="none" stroke="#ffffff" stroke-opacity="0.30" stroke-width="0.5"/>
<path d="M634.9 204.9 L641.0 205.6 L645.6 210.3 L648.0 215.4 L647.2 220.5 L645.1 225.1 L642.6 227.5 L639.5 229.0 L641.5 234.9 L643.6 241.0 L643.9 246.2 L642.6 253.3 L641.0 259.5 L639.8 265.0 L636.2 271.6 L632.9 280.4 L631.3 287.0 L626.9 294.7 L622.5 302.4 L621.4 305.7 L621.9 309.0 L631.0 312.8 L630.2 317.5 L618.1 315.5 L616.4 316.6 L617.0 324.9 L626.9 330.4 L623.8 335.3 L614.8 332.0 L607.1 327.6 L610.4 319.9 L609.3 313.4 L609.8 307.9 L613.1 298.0 L615.3 287.0 L615.9 276.0 L616.4 265.0 L618.3 263.6 L619.5 257.4 L619.0 251.3 L616.9 244.1 L619.5 236.9 L623.1 229.7 L626.9 224.6 L626.9 217.4 L627.2 209.2 L630.3 205.6Z" fill="none" stroke="#ffffff" stroke-opacity="0.42" stroke-width="0.8" stroke-linejoin="round"/>
<!--/FIG-->
</svg>
<!--/SCENE-->
<!--PANEL-->
<div class="abs card" style="top:64.5px;height:50.5px"></div>
<div class="abs lbl" style="top:71.3px;letter-spacing:-0.12px">Device</div>
<div class="abs fld" style="left:951px;top:86px;width:226px;height:22.5px;"></div>
<div class="abs bt" style="left:958.7px;width:130px;top:91.3px;letter-spacing:-0.10px;text-align:left">S1 Pro Multi Sense 250478</div>
<svg class="abs" style="left:1162px;top:93.3px" width="8" height="8" viewBox="0 0 8 8"><path d="M1.9 3 L4 5.1 L6.1 3" fill="none" stroke="#e6e8ec" stroke-width="1.1" stroke-linecap="round" stroke-linejoin="round"/></svg>
<div class="abs card" style="top:121.5px;height:50.5px"></div>
<div class="abs lbl" style="top:128.5px;letter-spacing:-0.07px">Status</div>
<div class="abs fld" style="left:951px;top:143.2px;width:226px;height:22.5px;"></div>
<div class="abs" style="left:958px;top:151.4px;width:6.4px;height:6.4px;border-radius:50%;background:#3fd05d"></div>
<div class="abs bt" style="left:971.3px;width:60px;top:148.6px;letter-spacing:-0.34px;text-align:left">Ready</div>
<div class="abs card" style="top:179px;height:51.5px"></div>
<div class="abs lbl" style="top:186.5px;letter-spacing:0px">View Mode</div>
<div class="abs btn" style="left:951px;top:201px;width:70.3px;height:22.5px;background:#151a28;border-color:#1b2133"></div>
<div class="abs bt" style="left:951px;width:70.3px;top:206.3px;letter-spacing:0.02px;padding-left:0.02px;">Live Targets</div>
<div class="abs fld" style="left:1024.2px;top:201px;width:80px;height:22.5px;"></div>
<div class="abs bt" style="left:1031.3px;width:40px;top:206.3px;letter-spacing:0.25px;text-align:left">24h</div>
<svg class="abs" style="left:1089.4px;top:208.3px" width="8" height="8" viewBox="0 0 8 8"><path d="M1.9 3 L4 5.1 L6.1 3" fill="none" stroke="#e6e8ec" stroke-width="1.1" stroke-linecap="round" stroke-linejoin="round"/></svg>
<div class="abs btn" style="left:1107.3px;top:201px;width:70.7px;height:22.5px;background:#10131a;border-color:#161a23"></div>
<div class="abs bt" style="left:1107.3px;width:70.7px;top:206.3px;letter-spacing:-0.08px;padding-left:-0.08px;">Heatmap</div>
<div class="abs card" style="top:236.8px;height:51px"></div>
<div class="abs lbl" style="top:243.9px;letter-spacing:0px">Detection range</div>
<div class="abs fld" style="left:951px;top:258.5px;width:111.4px;height:22.5px;"></div>
<div class="abs bt" style="left:958.5px;width:40px;top:263.8px;letter-spacing:0.45px;text-align:left">600</div>
<div class="abs btn" style="left:1066px;top:258.5px;width:112px;height:22.5px;background:#161a29;border-color:#1b2033"></div>
<div class="abs bt" style="left:1066px;width:112px;top:263.8px;letter-spacing:-0.42px;padding-left:-0.42px;">Save</div>
<div class="abs card" style="top:294px;height:125.7px"></div>
<div class="abs lbl" style="top:301.5px;letter-spacing:-0.08px">Zones</div>
<div class="abs btn" style="left:951px;top:315.7px;width:227px;height:22.3px;background:#10131a;border-color:#161a23"></div>
<div class="abs bt" style="left:951px;width:227px;top:320.8px;letter-spacing:-0.59px;padding-left:-0.59px;">Zone 1</div>
<div class="abs btn" style="left:951px;top:340.9px;width:227px;height:22.3px;background:#10131a;border-color:#161a23"></div>
<div class="abs bt" style="left:951px;width:227px;top:346.0px;letter-spacing:-0.39px;padding-left:-0.39px;">Zone 2</div>
<div class="abs btn" style="left:951px;top:366.2px;width:227px;height:22.3px;background:#10131a;border-color:#161a23"></div>
<div class="abs bt" style="left:951px;width:227px;top:371.3px;letter-spacing:-0.39px;padding-left:-0.39px;">Zone 3</div>
<div class="abs btn" style="left:951px;top:391.5px;width:227px;height:22.3px;background:#10131a;border-color:#161a23"></div>
<div class="abs bt" style="left:951px;width:227px;top:396.6px;letter-spacing:-0.35px;padding-left:-0.35px;">Exclusion Zone</div>
<div class="abs card" style="top:426.8px;height:50.7px"></div>
<div class="abs lbl" style="top:433.6px;letter-spacing:-0.16px">Actions</div>
<div class="abs btn" style="left:951px;top:448.6px;width:111.4px;height:22.2px;background:#161a29;border-color:#1b2033"></div>
<div class="abs bt" style="left:951px;width:111.4px;top:453.7px;letter-spacing:-0.42px;padding-left:-0.42px;">Save</div>
<div class="abs btn" style="left:1066.6px;top:448.6px;width:111.4px;height:22.2px;background:#10131a;border-color:#161a23"></div>
<div class="abs bt" style="left:1066.6px;width:111.4px;top:453.7px;letter-spacing:-0.12px;padding-left:-0.12px;">Clear</div>
<div class="abs btn" style="left:194px;top:65.5px;width:54px;height:31px;background:#0d1017;border-color:#171c27;border-radius:6px"></div>
<div class="abs" style="left:194px;top:75.2px;width:54px;height:12px;line-height:12px;font-size:8.15px;text-align:center;color:#e0e3e8;-webkit-text-stroke:0.25px #e0e3e8">Floorplan</div>
<div class="abs btn" style="left:864px;top:65.5px;width:59px;height:31px;background:#0d1017;border-color:#171c27;border-radius:6px"></div>
<div class="abs btn" style="left:896px;top:69.5px;width:23px;height:23px;background:#181d29;border-color:#181d29;border-radius:4px"></div>
<div class="abs" style="left:868px;top:75.2px;width:23px;height:12px;line-height:12px;font-size:8px;text-align:center;color:#cfd3da">2D</div>
<div class="abs" style="left:896px;top:75.2px;width:23px;height:12px;line-height:12px;font-size:8px;text-align:center;color:#f0f2f5;-webkit-text-stroke:0.25px #f0f2f5">3D</div>
<!--/PANEL-->
</div>
</body>
</html>
